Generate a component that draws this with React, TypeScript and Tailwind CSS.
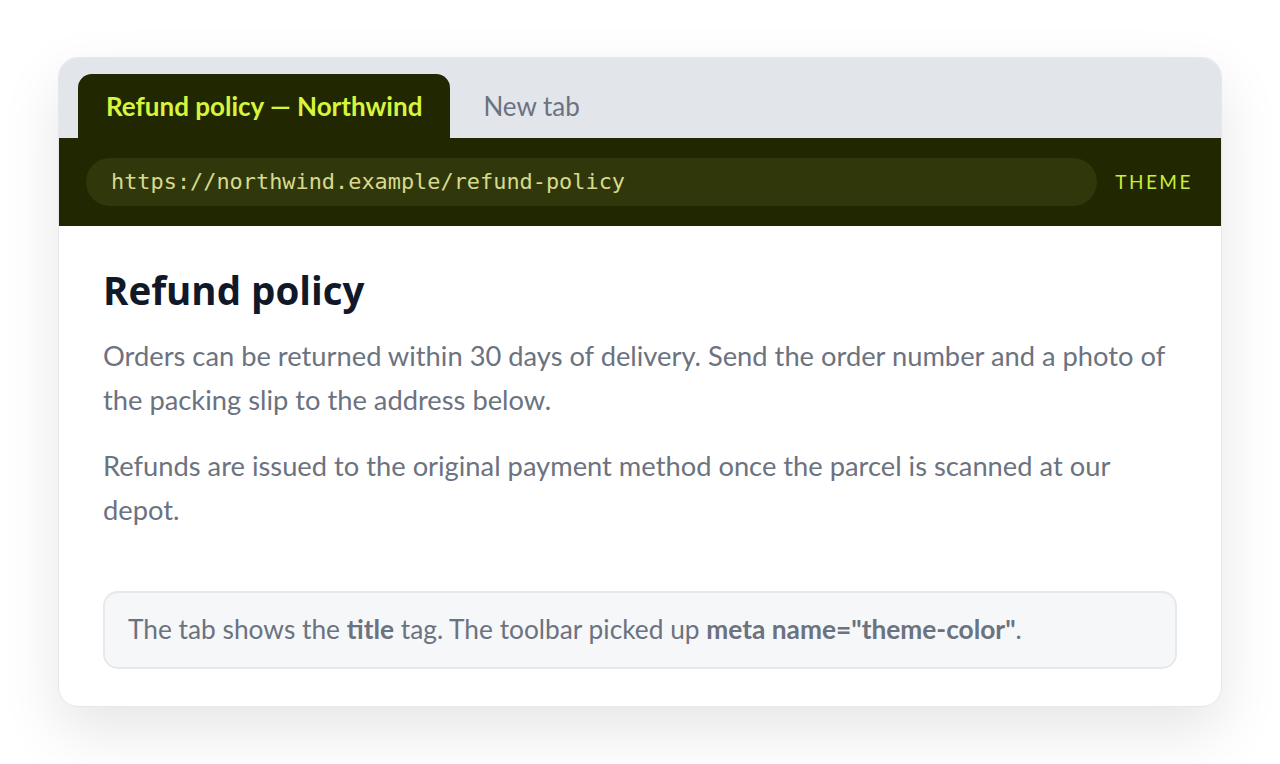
const sans = "font-['Lato','Noto_Sans',sans-serif]";

export default function App() {
  return (
    <div className={`min-h-[764px] bg-white pt-[57px] px-[58px] ${sans}`}>
      <div className="overflow-hidden rounded-[20px] border border-[#e5e7eb] bg-white shadow-[0_24px_60px_rgba(0,0,0,0.10)]">
        {/* tab strip */}
        <div className="flex items-end bg-[#e2e5ea] pl-[19px] pt-[16px]">
          <div className="flex h-[64px] items-center rounded-t-[14px] bg-[#212700] px-[28px] text-[26px] font-bold text-[#d6f53c]">
            Refund policy — Northwind
          </div>
          <div className="flex h-[64px] items-center px-[33px] text-[26px] text-[#6b7280]">
            New tab
          </div>
        </div>

        {/* toolbar */}
        <div className="flex h-[88px] items-center gap-[18px] bg-[#212700] pl-[27px] pr-[28px]">
          <div className="flex h-[48px] flex-1 items-center rounded-full bg-[#30370b] px-[25px] font-['DejaVu_Sans_Mono',monospace] text-[21.9px] text-[#d8d98c]">
            https://northwind.example/refund-policy
          </div>
          <span className="text-[19px] tracking-[2.5px] text-[#c8ef3a]">THEME</span>
        </div>

        {/* page body */}
        <div className="px-[44px] pt-[40px] pb-[37px]">
          <h1 className="font-['Open_Sans',sans-serif] text-[38.5px] font-bold leading-[48px] text-[#111827]">
            Refund policy
          </h1>
          <p className="mt-[20px] text-[27.3px] leading-[44px] text-[#6b7280]">
            Orders can be returned within 30 days of delivery. Send the order number and a photo of the packing
            slip to the address below.
          </p>
          <p className="mt-[22px] text-[27.3px] leading-[44px] text-[#6b7280]">
            Refunds are issued to the original payment method once the parcel is scanned at our depot.
          </p>

          <div className="mt-[59px] flex h-[78px] items-center rounded-[15px] border-2 border-[#e6e8eb] bg-[#f6f7f9] px-[23px] text-[26.3px] text-[#6b7280]">
            <span>
              The tab shows the <b className="font-bold">title</b> tag. The toolbar picked up{" "}
              <b className="font-bold">meta name="theme-color"</b>.
            </span>
          </div>
        </div>
      </div>
    </div>
  );
}
